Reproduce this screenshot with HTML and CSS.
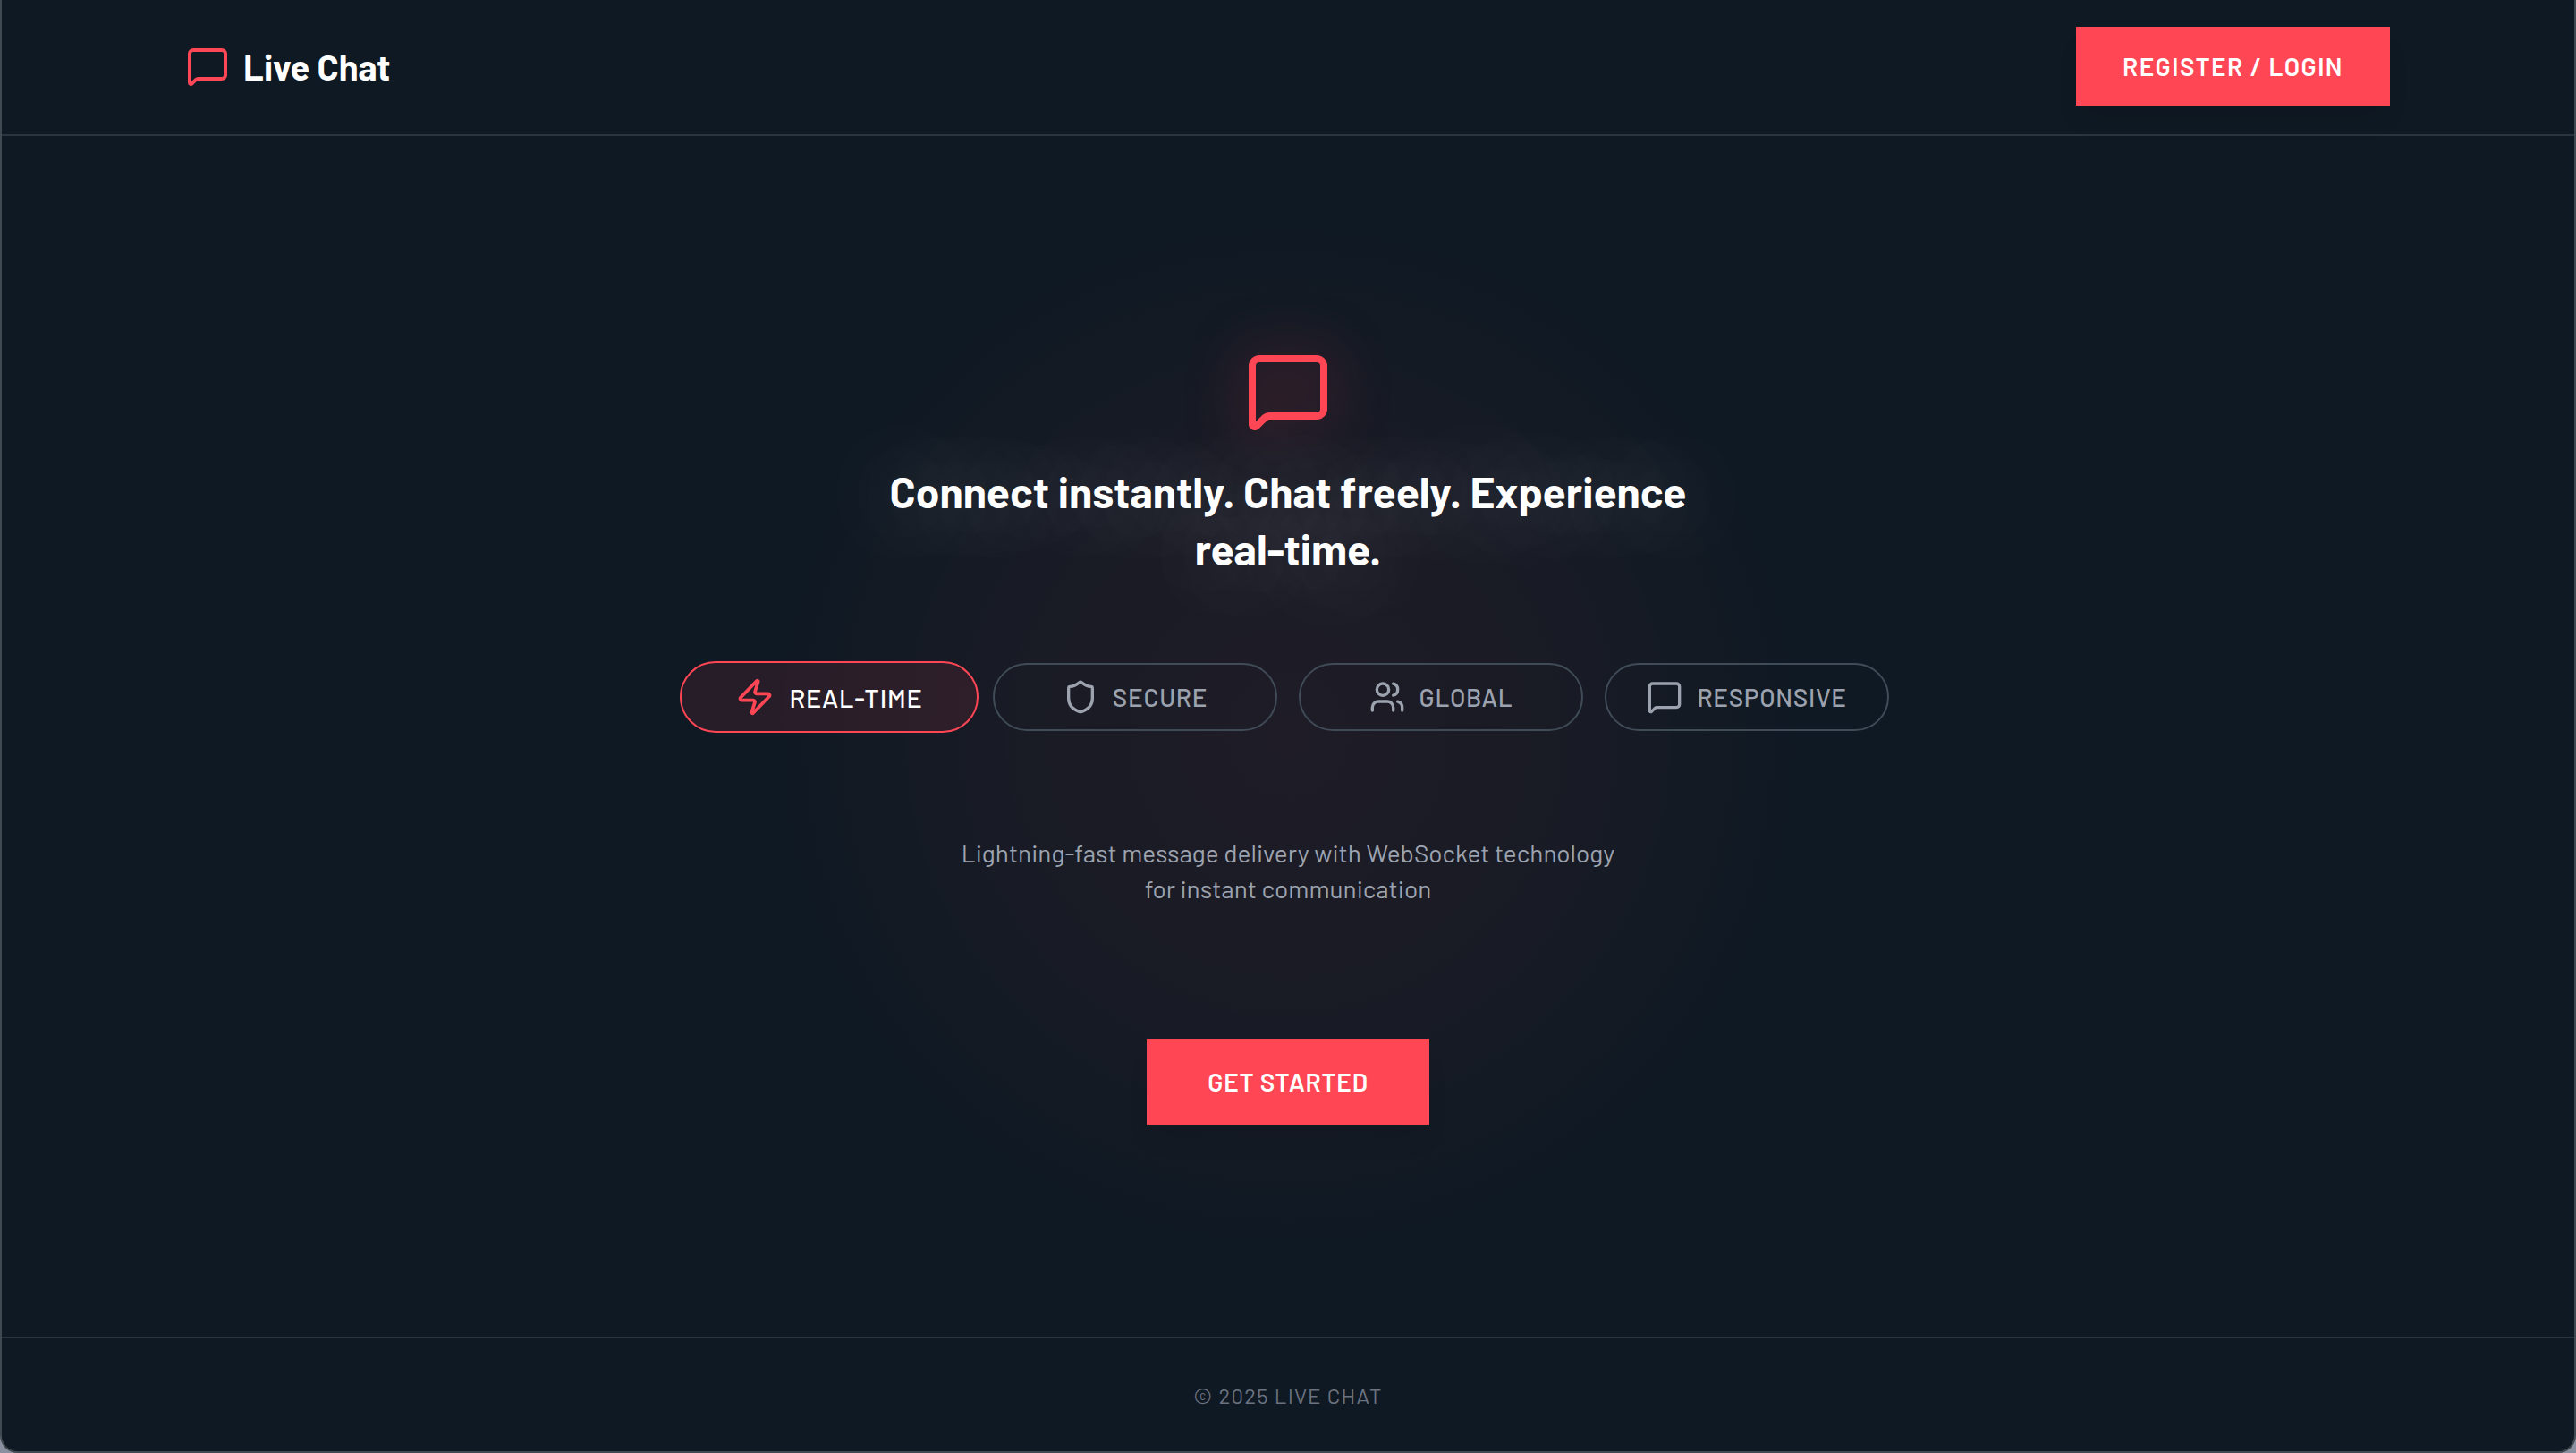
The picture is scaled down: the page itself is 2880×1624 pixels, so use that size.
FILE: index.html
```html
<!DOCTYPE html>
<html lang="en">
<head>
<meta charset="utf-8">
<title>Live Chat</title>
<link rel="stylesheet" href="styles.css">
</head>
<body>
<svg class="sprite" aria-hidden="true">
  <symbol id="message" viewBox="0 0 24 24"><path d="M22 17a2 2 0 0 1-2 2H6.828a2 2 0 0 0-1.414.586l-2.202 2.202A.71.71 0 0 1 2 21.286V5a2 2 0 0 1 2-2h16a2 2 0 0 1 2 2z"/></symbol>
  <symbol id="zap" viewBox="0 0 24 24"><path d="M4 14a1 1 0 0 1-.78-1.63l9.9-10.2a.5.5 0 0 1 .86.46l-1.92 6.02A1 1 0 0 0 13 10h7a1 1 0 0 1 .78 1.63l-9.9 10.2a.5.5 0 0 1-.86-.46l1.92-6.02A1 1 0 0 0 11 14z"/></symbol>
  <symbol id="shield" viewBox="0 0 24 24"><path d="M20 13c0 5-3.5 7.5-7.66 8.95a1 1 0 0 1-.67-.01C7.5 20.5 4 18 4 13V6a1 1 0 0 1 1-1c2 0 4.5-1.2 6.24-2.72a1.17 1.17 0 0 1 1.52 0C14.51 3.81 17 5 19 5a1 1 0 0 1 1 1z"/></symbol>
  <symbol id="users" viewBox="0 0 24 24"><path d="M16 21v-2a4 4 0 0 0-4-4H6a4 4 0 0 0-4 4v2"/><path d="M16 3.128a4 4 0 0 1 0 7.744"/><path d="M22 21v-2a4 4 0 0 0-3-3.87"/><circle cx="9" cy="7" r="4"/></symbol>
</svg>
<div class="window">
  <header class="header">
    <div class="header-inner">
      <a class="brand" href="#"><svg class="icon brand-icon"><use href="#message"/></svg><span>Live Chat</span></a>
      <button class="button" type="button">REGISTER / LOGIN</button>
    </div>
  </header>
  <main class="hero">
    <svg class="icon hero-icon"><use href="#message"/></svg>
    <h1 class="title">Connect instantly. Chat freely. Experience real-time.</h1>
    <div class="features">
      <button class="feature feature-active" type="button"><svg class="icon"><use href="#zap"/></svg><span>REAL-TIME</span></button>
      <button class="feature" type="button"><svg class="icon"><use href="#shield"/></svg><span>SECURE</span></button>
      <button class="feature" type="button"><svg class="icon"><use href="#users"/></svg><span>GLOBAL</span></button>
      <button class="feature" type="button"><svg class="icon"><use href="#message"/></svg><span>RESPONSIVE</span></button>
    </div>
    <p class="description">Lightning-fast message delivery with WebSocket technology for instant communication</p>
    <button class="button button-large" type="button">GET STARTED</button>
  </main>
  <footer class="footer">© 2025 LIVE CHAT</footer>
</div>
</body>
</html>
```
FILE: styles.css
```css
* {
  box-sizing: border-box;
}

body {
  margin: 0;
  background: #8b90a0;
  color: #fff;
  font-family: "Barlow", Roboto, sans-serif;
}

button {
  font-family: inherit;
  cursor: pointer;
}

.sprite {
  position: absolute;
  width: 0;
  height: 0;
}

.icon {
  flex: none;
  width: 40px;
  height: 40px;
  fill: none;
  stroke: currentColor;
  stroke-width: 2;
  stroke-linecap: round;
  stroke-linejoin: round;
}

.window {
  display: flex;
  flex-direction: column;
  min-height: 100vh;
  background: #0f1923;
  border: 2px solid #3e4950;
  border-top: 0;
  border-radius: 0 0 20px 20px;
  overflow: hidden;
}

.header {
  border-bottom: 2px solid #2a353f;
}

.header-inner {
  display: flex;
  align-items: center;
  justify-content: space-between;
  max-width: 2464px;
  margin: 0 auto;
  padding: 30px 0 32px;
}

.brand {
  display: flex;
  align-items: center;
  gap: 16px;
  color: #fff;
  font-size: 40px;
  font-weight: 700;
  line-height: 56px;
  text-decoration: none;
}

.brand-icon {
  width: 48px;
  height: 48px;
  color: #ff4655;
}

.button {
  height: 88px;
  padding: 0 52px;
  border: 0;
  background: #ff4655;
  color: #fff;
  font-size: 28px;
  font-weight: 600;
  letter-spacing: 0.05em;
  box-shadow: 0 20px 30px -6px rgba(0, 0, 0, 0.08);
}

.button-large {
  height: 96px;
  padding: 0 68px;
  letter-spacing: 0.025em;
}

.hero {
  flex: 1;
  display: flex;
  flex-direction: column;
  align-items: center;
  justify-content: center;
  background: radial-gradient(circle at center, rgba(255, 70, 85, 0.065), rgba(255, 70, 85, 0.04) 320px, rgba(255, 70, 85, 0) 580px);
}

.hero-icon {
  width: 96px;
  height: 96px;
  margin-bottom: 32px;
  color: #ff4655;
  filter: drop-shadow(0 0 30px rgba(255, 70, 85, 0.5));
}

.title {
  max-width: 960px;
  margin: 0 0 96px;
  font-size: 48px;
  font-weight: 700;
  line-height: 64px;
  text-align: center;
  text-shadow: 0 0 100px rgba(255, 255, 255, 0.5);
}

.features {
  display: grid;
  grid-template-columns: repeat(4, 1fr);
  gap: 24px;
  width: 100%;
  max-width: 1344px;
  margin-bottom: 116px;
}

.feature {
  display: flex;
  align-items: center;
  justify-content: center;
  gap: 16px;
  height: 76px;
  padding: 0;
  border: 2px solid #3f4b57;
  border-radius: 40px;
  background: transparent;
  color: #9ca3af;
  font-size: 28px;
  font-weight: 500;
  letter-spacing: 0.025em;
}

.feature-active {
  height: 80px;
  margin: -2px -8px;
  border-color: #ff4655;
  background: rgba(255, 70, 85, 0.1);
  color: #fff;
  font-size: 29px;
}

.feature-active .icon {
  width: 44px;
  height: 44px;
  color: #ff4655;
}

.description {
  max-width: 752px;
  margin: 0 0 148px;
  color: #9ca3af;
  font-size: 28px;
  font-weight: 400;
  line-height: 40px;
  text-align: center;
}

.footer {
  padding: 48px 0 46px;
  border-top: 2px solid #2a353f;
  color: #6b7280;
  font-size: 24px;
  font-weight: 400;
  line-height: 32px;
  letter-spacing: 0.05em;
  text-align: center;
}
```
